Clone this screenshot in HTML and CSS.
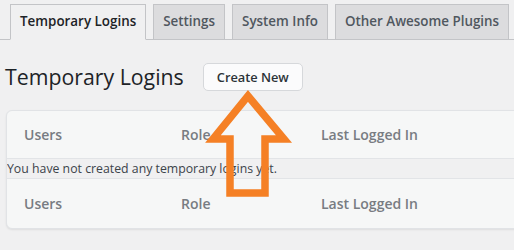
FILE: index.html
```html
<!DOCTYPE html>
<html lang="en">
  <head>
    <meta charset="UTF-8" />
    <meta name="viewport" content="width=device-width, initial-scale=1.0" />
    <title>Temporary Logins</title>
    <link rel="stylesheet" href="styles.css">
  </head>
  <body>
    <nav class="nav-tabs">
      <a class="tab active" href="#">Temporary Logins</a>
      <a class="tab" href="#">Settings</a>
      <a class="tab" href="#">System Info</a>
      <a class="tab" href="#">Other Awesome Plugins</a>
    </nav>

    <div class="page-head">
      <h1>Temporary Logins</h1>
      <button type="button" class="btn">Create New</button>
    </div>

    <div class="card">
      <div class="row head">
        <span>Users</span>
        <span>Role</span>
        <span>Last Logged In</span>
      </div>
      <div class="empty">You have not created any temporary logins yet.</div>
      <div class="row foot">
        <span>Users</span>
        <span>Role</span>
        <span>Last Logged In</span>
      </div>
    </div>

    <!-- arrow drawn over the page, pointing at the button -->
    <svg class="arrow" width="514" height="250" viewBox="0 0 514 250">
      <polygon
        points="248,96 284,139 265,139 265,193 230,193 230,139 213,139"
        fill="none"
        stroke="#f58025"
        stroke-width="7.5"
        stroke-linejoin="miter"
      />
    </svg>
  </body>
</html>
```

FILE: styles.css
```css
* {
  margin: 0;
  padding: 0;
  box-sizing: border-box;
}
body {
  font-family: "Open Sans", "Noto Sans", Arial, sans-serif;
  background-color: #f0f0f1;
  color: #3c434a;
  width: 514px;
  height: 250px;
  overflow: hidden;
  position: relative;
}
.nav-tabs {
  display: flex;
  gap: 7px;
  padding: 4px 0 0 10px;
  border-bottom: 1px solid #c3c4c7;
  height: 40px;
}
.tab {
  display: block;
  height: 36px;
  padding: 0 9px;
  border: 1px solid #c3c4c7;
  background-color: #dcdcde;
  color: #50575e;
  font-size: 13.4px;
  font-weight: 600;
  line-height: 33px;
  text-decoration: none;
  white-space: nowrap;
}
.tab.active {
  background-color: #f0f0f1;
  border-bottom-color: #f0f0f1;
  color: #1d2327;
}
.page-head {
  display: flex;
  align-items: center;
  gap: 19px;
  padding: 4px 0 0 5px;
  height: 70px;
}
.page-head h1 {
  font-size: 21.3px;
  font-weight: 400;
  color: #1d2327;
  line-height: 28px;
}
.btn {
  font-family: inherit;
  height: 28px;
  padding: 0 13px;
  background-color: #fbfbfc;
  border: 1px solid #d6d8db;
  border-radius: 5px;
  color: #2c3338;
  font-size: 12.8px;
  font-weight: 600;
  cursor: pointer;
}
.card {
  margin-left: 6px;
  width: 560px;
  background-color: #f6f7f7;
  border: 1px solid #e1e3e6;
  border-radius: 6px;
  box-shadow: 0 1px 2px rgba(0, 0, 0, 0.08);
  overflow: hidden;
}
.row {
  display: grid;
  grid-template-columns: 157px 140px 1fr;
  padding-left: 17px;
  align-items: center;
  color: #787c82;
  font-size: 14px;
  font-weight: 600;
}
.row.head {
  height: 47px;
}
.row.foot {
  height: 49px;
}
.empty {
  height: 21px;
  line-height: 19px;
  margin-left: -1px;
  padding-left: 1px;
  background-color: #f0f0f1;
  border-top: 1px solid #e2e4e7;
  border-bottom: 1px solid #e2e4e7;
  color: #3c434a;
  font-size: 12.3px;
}
.arrow {
  position: absolute;
  left: 0;
  top: 0;
  pointer-events: none;
}
```
